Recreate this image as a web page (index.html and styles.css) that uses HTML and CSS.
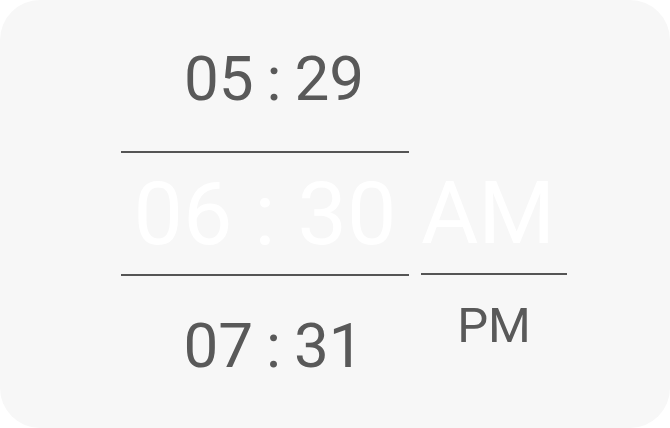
FILE: index.html
```html
<!DOCTYPE html>
<html>
<head>
<meta charset="utf-8">
<link rel="stylesheet" href="styles.css">
</head>
<body>
<div class="card">
  <div class="picker">
    <div class="col col-time">
      <div class="item item-top">05 : 29</div>
      <div class="rule"></div>
      <div class="item item-sel">06 : 30</div>
      <div class="rule"></div>
      <div class="item item-bot">07 : 31</div>
    </div>
    <div class="col col-ampm">
      <div class="item item-sel">AM</div>
      <div class="rule"></div>
      <div class="item item-pm">PM</div>
    </div>
  </div>
</div>
</body>
</html>
```
FILE: styles.css
```css
html, body {
  margin: 0;
  padding: 0;
  background: #ffffff;
}
.card {
  width: 670px;
  height: 428px;
  background: #f7f7f7;
  border-radius: 40px;
  overflow: hidden;
  font-family: Roboto, "Noto Sans", sans-serif;
  color: #595959;
}
.picker {
  display: flex;
  padding-left: 121px;
  gap: 12px;
}
.col {
  display: flex;
  flex-direction: column;
}
.col-time {
  width: 288px;
  padding-top: 31px;
}
.col-ampm {
  width: 146px;
  padding-top: 153px;
}
.item {
  text-align: center;
  white-space: nowrap;
}
.rule {
  height: 2px;
  background: #555555;
}
.item-top {
  height: 96px;
  line-height: 96px;
  font-size: 62px;
  margin-bottom: 24px;
  padding-left: 18px;
  word-spacing: -2.5px;
}
.item-sel {
  height: 121px;
  line-height: 121px;
  font-size: 88px;
  color: #ffffff;
}
.col-ampm .item-sel {
  height: 120px;
  line-height: 120px;
  margin-left: -12px;
}
.item-bot {
  height: 96px;
  line-height: 96px;
  font-size: 62px;
  margin-top: 22px;
  padding-left: 17px;
  word-spacing: -2.5px;
}
.item-pm {
  height: 96px;
  line-height: 96px;
  font-size: 49px;
  margin-top: 3px;
}
```
